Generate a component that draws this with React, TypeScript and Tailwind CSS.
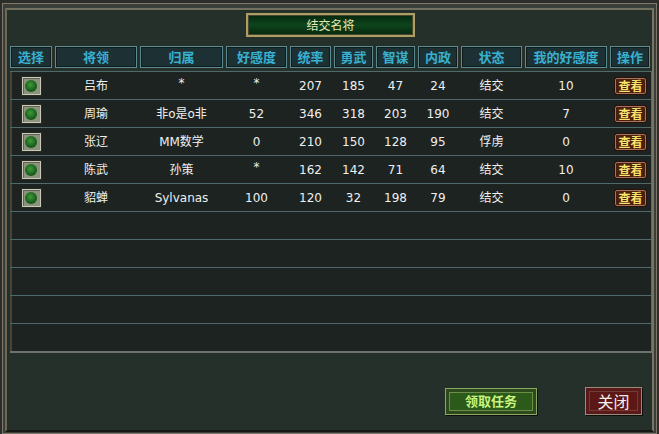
import React from "react";

const cols = "grid grid-cols-[42px_82px_83px_61px_41px_39px_39px_40px_61px_82px_40px] gap-x-[3px]";

const headers = ["选择", "将领", "归属", "好感度", "统率", "勇武", "智谋", "内政", "状态", "我的好感度", "操作"];

const rows = [
  ["吕布", "*", "*", "207", "185", "47", "24", "结交", "10"],
  ["周瑜", "非o是o非", "52", "346", "318", "203", "190", "结交", "7"],
  ["张辽", "MM数学", "0", "210", "150", "128", "95", "俘虏", "0"],
  ["陈武", "孙策", "*", "162", "142", "71", "64", "结交", "10"],
  ["貂蝉", "Sylvanas", "100", "120", "32", "198", "79", "结交", "0"],
];

function Check() {
  return (
    <div className="w-[21px] h-[20px] border border-[#2a2a22] bg-[#c9c9b6] p-[1px]">
      <div className="w-full h-full bg-[#8b927e] flex items-center justify-center shadow-[inset_1px_1px_0_#5e6456]">
        <div className="w-[12px] h-[12px] rounded-full bg-[radial-gradient(circle_at_45%_40%,#3f9a3a,#17601a_60%,#0d3f10)]" />
      </div>
    </div>
  );
}

function ViewBtn() {
  return (
    <div className="w-[31px] h-[16px] rounded-[2px] border border-[#a8745c] bg-[#4a1f0c] shadow-[0_0_0_1px_#2a120a] flex items-center justify-center text-[12px] leading-none font-bold text-[#f8e46c] font-['Noto_Sans_CJK_SC',sans-serif]">
      查看
    </div>
  );
}

export default function App() {
  return (
    <div className="w-[659px] h-[434px] bg-[#2a2d2a] pt-[3px] pl-[2px] pr-[2px] font-['DejaVu_Sans','Noto_Sans_CJK_SC',sans-serif]">
      <div className="h-[431px] border border-[#80786a] bg-[#3a3e39] pt-[4px] pl-[2px] pr-[2px] pb-[1px]">
        <div className="h-full border-2 border-t-[#72705e] border-l-[#6d6756] border-r-[#7a7462] border-b-[#141714] bg-[#25302b] pl-[3px] pr-[1px] flex flex-col">
          {/* title */}
          <div className="flex justify-center mt-[3px]">
            <div className="w-[169px] h-[24px] border-2 border-[#ad9f63] bg-[#4a4630] p-[1px]">
              <div className="h-full bg-[linear-gradient(#062a10,#0d451c_50%,#062a10)] flex items-center justify-center text-[12px] text-[#e6e8b4] font-['Noto_Sans_CJK_SC',sans-serif]">
                结交名将
              </div>
            </div>
          </div>

          {/* header */}
          <div className={`${cols} mt-[9px] h-[22px]`}>
            {headers.map((h) => (
              <div
                key={h}
                className="border border-[#5d8a8f] bg-[#1d3135] shadow-[inset_1px_1px_0_#0f1c1e,inset_-1px_-1px_0_#0f1c1e] flex items-center justify-center text-[13px] font-bold text-[#38b0d0] font-['Noto_Sans_CJK_SC',sans-serif]"
              >
                {h}
              </div>
            ))}
          </div>

          {/* rows */}
          <div className="mt-[3px] w-[642px]">
            {rows.map((r, i) => (
              <div
                key={i}
                className={`${cols} h-[28px] border-t border-[#50696b] bg-[#1c2320] shadow-[inset_2px_0_0_#4b4336,inset_-1px_0_0_#6b6450] items-center text-[12px] text-[#f0f0f0]`}
              >
                <div className="flex justify-center">
                  <Check />
                </div>
                {r.map((c, j) => (
                  <div key={j} className={`text-center leading-none ${c === "*" ? "-translate-y-[3px]" : ""}`}>
                    {c}
                  </div>
                ))}
                <div className="flex justify-center pl-[1px]">
                  <ViewBtn />
                </div>
              </div>
            ))}
            {[0, 1, 2, 3, 4].map((i) => (
              <div
                key={"e" + i}
                className="h-[28px] border-t border-[#50696b] bg-[#1c2320] shadow-[inset_2px_0_0_#4b4336,inset_-1px_0_0_#6b6450]"
              />
            ))}
            <div className="h-[2px] bg-[#6e726a]" />
          </div>

          {/* buttons */}
          <div className="flex justify-end items-center gap-[48px] mt-[34px] pr-[9px]">
            <div className="w-[92px] h-[27px] border border-[#8aa864] bg-[#2d4a1c] shadow-[1px_1px_0_#0c0f0b] p-[3px]">
              <div className="h-full border border-[#6c8f4a] bg-[#2b5a1a] flex items-center justify-center text-[13px] font-bold text-[#c9f47e] font-['Noto_Sans_CJK_SC',sans-serif]">
                领取任务
              </div>
            </div>
            <div className="w-[57px] h-[28px] border border-[#9a8a7a] bg-[#5a1a1a] shadow-[1px_1px_0_#0c0f0b] p-[3px]">
              <div className="h-full border border-[#7a3a34] bg-[#5c1717] flex items-center justify-center text-[16px] text-[#f4f0ea] font-['Noto_Sans_CJK_SC',sans-serif]">
                关闭
              </div>
            </div>
          </div>
        </div>
      </div>
    </div>
  );
}
